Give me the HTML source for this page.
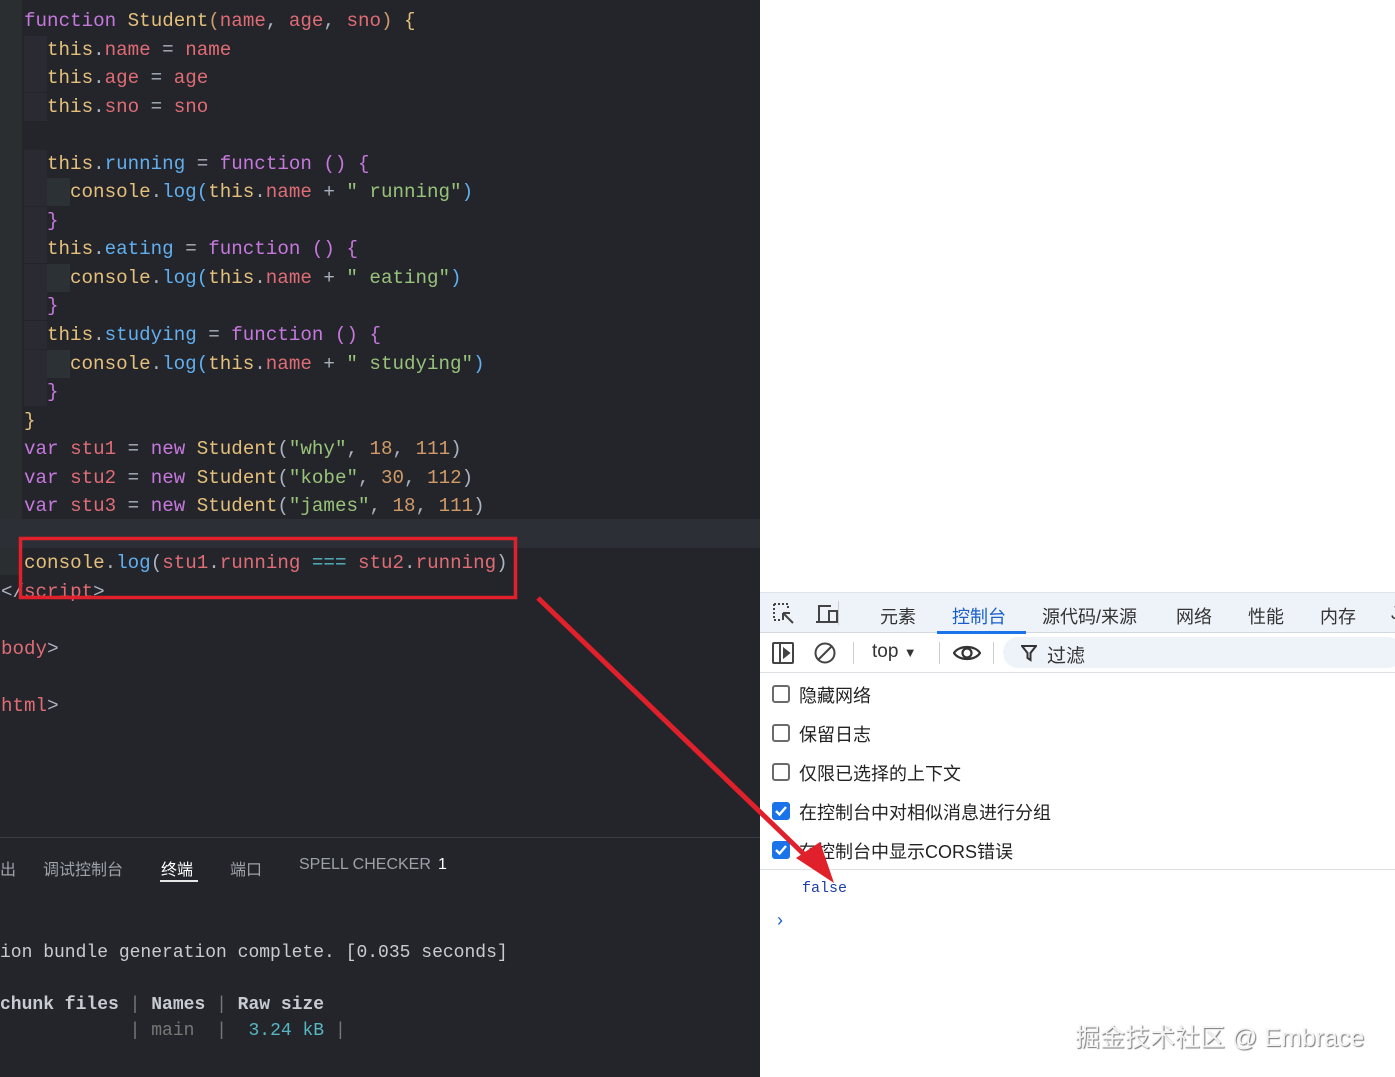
<!DOCTYPE html>
<html><head><meta charset="utf-8"><style>
*{margin:0;padding:0;box-sizing:border-box}
body{width:1395px;height:1077px;position:relative;overflow:hidden;background:#fff;font-family:"Liberation Sans","Noto Sans CJK SC",sans-serif}
#ed{position:absolute;left:0;top:0;width:760px;height:1077px;background:#23252b;overflow:hidden}
.gut{position:absolute;left:0;top:0;width:22px;height:575px;background:#2b2e30}
.curl{position:absolute;left:0;top:519px;width:760px;height:29px;background:#2c2f36}
.code{position:absolute;left:1px;top:7px;font-family:"Liberation Mono",monospace;font-size:19.2px;line-height:28.55px;color:#abb2bf;white-space:pre}
.k{color:#c678dd}.y{color:#e5c07b}.r{color:#e06c75}.b{color:#61afef}.g{color:#98c379}.o{color:#d19a66}.c{color:#56b6c2}.w{color:#abb2bf}
.ind{display:inline-block;width:23px;height:28px;vertical-align:top;background:#2a2a33}
.ind2{display:inline-block;width:23px;height:28px;vertical-align:top;background:#2c3136}
#term{position:absolute;left:0;top:837px;width:760px;height:240px;border-top:1px solid #3a3d44;background:#23252b}
.tab{position:absolute;top:18px;font-size:16px;color:#9da1a8}
.tout{position:absolute;left:0;font-family:"Liberation Mono",monospace;font-size:18px;color:#c8ccd2;white-space:pre}
#dt{position:absolute;left:760px;top:592px;width:635px;height:485px;background:#fff}
.tb{position:absolute;left:0;top:0;width:635px;height:41px;background:#eef2f9;border-top:1px solid #dfe3ea;border-bottom:1px solid #d3d8e0}
.dtab{position:absolute;top:10px;font-size:18px;color:#333}
.tb2{position:absolute;left:0;top:41px;width:635px;height:40px;border-bottom:1px solid #dde1e6}
.chk{position:absolute;left:12px;width:18px;height:18px;border:2px solid #6b6b6b;border-radius:3px}
.chk.on{background:#1a73e8;border-color:#1a73e8}
.lbl{position:absolute;left:39px;font-size:18px;color:#222}
#wm{position:absolute;left:1075px;top:1018px;font-size:25px;color:#f4f4f4;text-shadow:1px 1px 1px #777;font-family:"Liberation Sans","Noto Sans CJK SC",sans-serif}
</style></head><body>
<div id="ed">
<div class="gut"></div>
<div class="curl"></div>
<div class="code"><span class="k">  function</span> <span class="y">Student</span><span class="o">(</span><span class="r">name</span>, <span class="r">age</span>, <span class="r">sno</span><span class="o">)</span> <span class="y">{</span>
  <span class="ind"></span><span class="y">this</span>.<span class="r">name</span> = <span class="r">name</span>
  <span class="ind"></span><span class="y">this</span>.<span class="r">age</span> = <span class="r">age</span>
  <span class="ind"></span><span class="y">this</span>.<span class="r">sno</span> = <span class="r">sno</span>

  <span class="ind"></span><span class="y">this</span>.<span class="b">running</span> = <span class="k">function</span> <span class="k">()</span> <span class="k">{</span>
  <span class="ind"></span><span class="ind2"></span><span class="y">console</span>.<span class="b">log</span><span class="b">(</span><span class="y">this</span>.<span class="r">name</span> + <span class="g">" running"</span><span class="b">)</span>
  <span class="ind"></span><span class="k">}</span>
  <span class="ind"></span><span class="y">this</span>.<span class="b">eating</span> = <span class="k">function</span> <span class="k">()</span> <span class="k">{</span>
  <span class="ind"></span><span class="ind2"></span><span class="y">console</span>.<span class="b">log</span><span class="b">(</span><span class="y">this</span>.<span class="r">name</span> + <span class="g">" eating"</span><span class="b">)</span>
  <span class="ind"></span><span class="k">}</span>
  <span class="ind"></span><span class="y">this</span>.<span class="b">studying</span> = <span class="k">function</span> <span class="k">()</span> <span class="k">{</span>
  <span class="ind"></span><span class="ind2"></span><span class="y">console</span>.<span class="b">log</span><span class="b">(</span><span class="y">this</span>.<span class="r">name</span> + <span class="g">" studying"</span><span class="b">)</span>
  <span class="ind"></span><span class="k">}</span>
  <span class="y">}</span>
  <span class="k">var</span> <span class="r">stu1</span> = <span class="k">new</span> <span class="y">Student</span>(<span class="g">"why"</span>, <span class="o">18</span>, <span class="o">111</span>)
  <span class="k">var</span> <span class="r">stu2</span> = <span class="k">new</span> <span class="y">Student</span>(<span class="g">"kobe"</span>, <span class="o">30</span>, <span class="o">112</span>)
  <span class="k">var</span> <span class="r">stu3</span> = <span class="k">new</span> <span class="y">Student</span>(<span class="g">"james"</span>, <span class="o">18</span>, <span class="o">111</span>)

  <span class="y">console</span>.<span class="b">log</span>(<span class="r">stu1</span>.<span class="r">running</span> <span class="c">===</span> <span class="r">stu2</span>.<span class="r">running</span>)
<span class="w">&lt;/</span><span class="r">script</span><span class="w">&gt;</span>

<span class="r">body</span><span class="w">&gt;</span>

<span class="r">html</span><span class="w">&gt;</span></div>
<div id="term">
<div class="tab" style="left:0">出</div>
<div class="tab" style="left:43px">调试控制台</div>
<div class="tab" style="left:161px;color:#fff">终端<div style="position:absolute;left:-1px;top:24px;width:38px;height:2px;background:#e6e6e6"></div></div>
<div class="tab" style="left:230px">端口</div>
<div class="tab" style="left:299px">SPELL CHECKER</div>
<div class="tab" style="left:438px;color:#fff">1</div>
<div class="tout" style="top:105px">ion bundle generation complete. [0.035 seconds]</div>
<div class="tout" style="top:157px;font-weight:bold">chunk files <span style="font-weight:normal;color:#777">|</span> Names <span style="font-weight:normal;color:#777">|</span> Raw size</div>
<div class="tout" style="top:183px">            <span style="color:#777">|</span> <span style="color:#777">main</span>  <span style="color:#777">|</span>  <span style="color:#56b6c2">3.24 kB</span> <span style="color:#777">|</span></div>
</div>
</div>
<div id="dt">
<div class="tb">
<svg style="position:absolute;left:12px;top:9px" width="24" height="24" viewBox="0 0 24 24" fill="none" stroke="#444" stroke-width="2"><path d="M2 2h14v6M2 2v16h6" stroke-dasharray="2 2"/><path d="M11 11l10 10M11 11h7M11 11v7"/></svg>
<svg style="position:absolute;left:55px;top:9px" width="26" height="24" viewBox="0 0 26 24" fill="none" stroke="#444" stroke-width="2"><path d="M4 19V4h12M1 20h12"/><rect x="14" y="9" width="8" height="11"/></svg>
<div style="position:absolute;left:78px;top:8px;width:1px;height:24px;background:#ccc"></div>
<div class="dtab" style="left:120px">元素</div>
<div class="dtab" style="left:192px;color:#1a5fc9">控制台</div>
<div style="position:absolute;left:177px;top:38px;width:89px;height:3px;background:#1a73e8"></div>
<div class="dtab" style="left:282px">源代码/来源</div>
<div class="dtab" style="left:416px">网络</div>
<div class="dtab" style="left:488px">性能</div>
<div class="dtab" style="left:560px">内存</div>
<div class="dtab" style="left:631px">J</div>
</div>
<div class="tb2">
<svg style="position:absolute;left:12px;top:9px" width="22" height="22" viewBox="0 0 22 22" fill="none" stroke="#444" stroke-width="2"><rect x="1" y="1" width="20" height="20" rx="1"/><path d="M8 1v20"/><path d="M12 7l5 4-5 4z" fill="#444"/></svg>
<svg style="position:absolute;left:54px;top:9px" width="22" height="22" viewBox="0 0 22 22" fill="none" stroke="#444" stroke-width="2"><circle cx="11" cy="11" r="9.5"/><path d="M4 18L18 4"/></svg>
<div style="position:absolute;left:93px;top:9px;width:1px;height:22px;background:#ccc"></div>
<div style="position:absolute;left:112px;top:8px;font-size:19px;color:#333">top <span style="font-size:13px">▼</span></div>
<div style="position:absolute;left:179px;top:9px;width:1px;height:22px;background:#ccc"></div>
<svg style="position:absolute;left:193px;top:10px" width="28" height="20" viewBox="0 0 28 20" fill="none" stroke="#333" stroke-width="2.2"><path d="M1 10C6 2 22 2 27 10C22 18 6 18 1 10z"/><circle cx="14" cy="10" r="4.5"/></svg>
<div style="position:absolute;left:233px;top:9px;width:1px;height:22px;background:#ccc"></div>
<div style="position:absolute;left:243px;top:4px;width:400px;height:31px;border-radius:16px;background:#eef2f9"></div>
<svg style="position:absolute;left:261px;top:11px" width="16" height="18" viewBox="0 0 16 18" fill="none" stroke="#333" stroke-width="2"><path d="M1 2h14L9.5 9v7L6.5 14V9z"/></svg>
<div style="position:absolute;left:287px;top:8px;font-size:19px;color:#333">过滤</div>
</div>
<div class="chk" style="top:93px"></div><div class="lbl" style="top:90px">隐藏网络</div>
<div class="chk" style="top:132px"></div><div class="lbl" style="top:129px">保留日志</div>
<div class="chk" style="top:171px"></div><div class="lbl" style="top:168px">仅限已选择的上下文</div>
<div class="chk on" style="top:210px"><svg width="14" height="14" viewBox="0 0 14 14" style="position:absolute;left:0;top:0"><path d="M2 7l3.5 3.5L12 3" stroke="#fff" stroke-width="2.4" fill="none"/></svg></div><div class="lbl" style="top:207px">在控制台中对相似消息进行分组</div>
<div class="chk on" style="top:249px"><svg width="14" height="14" viewBox="0 0 14 14" style="position:absolute;left:0;top:0"><path d="M2 7l3.5 3.5L12 3" stroke="#fff" stroke-width="2.4" fill="none"/></svg></div><div class="lbl" style="top:246px">在控制台中显示CORS错误</div>
<div style="position:absolute;left:0;top:277px;width:635px;height:1px;background:#dde1e6"></div>
<div style="position:absolute;left:42px;top:288px;font-family:'Liberation Mono',monospace;font-size:15px;color:#1c3fa8">false</div>
<div style="position:absolute;left:17px;top:318px;font-size:18px;color:#1a5fc9">›</div>
</div>
<svg style="position:absolute;left:0;top:0" width="1395" height="1077">
<rect x="20.5" y="538.5" width="495" height="59" fill="none" stroke="#e0202a" stroke-width="3.5"/>
<path d="M538 598L812 862" stroke="#e0202a" stroke-width="5" fill="none"/>
<path d="M796 858L834 883L820 842z" fill="#e0202a"/>
</svg>
<div id="wm">掘金技术社区 @ Embrace</div>
</body></html>
